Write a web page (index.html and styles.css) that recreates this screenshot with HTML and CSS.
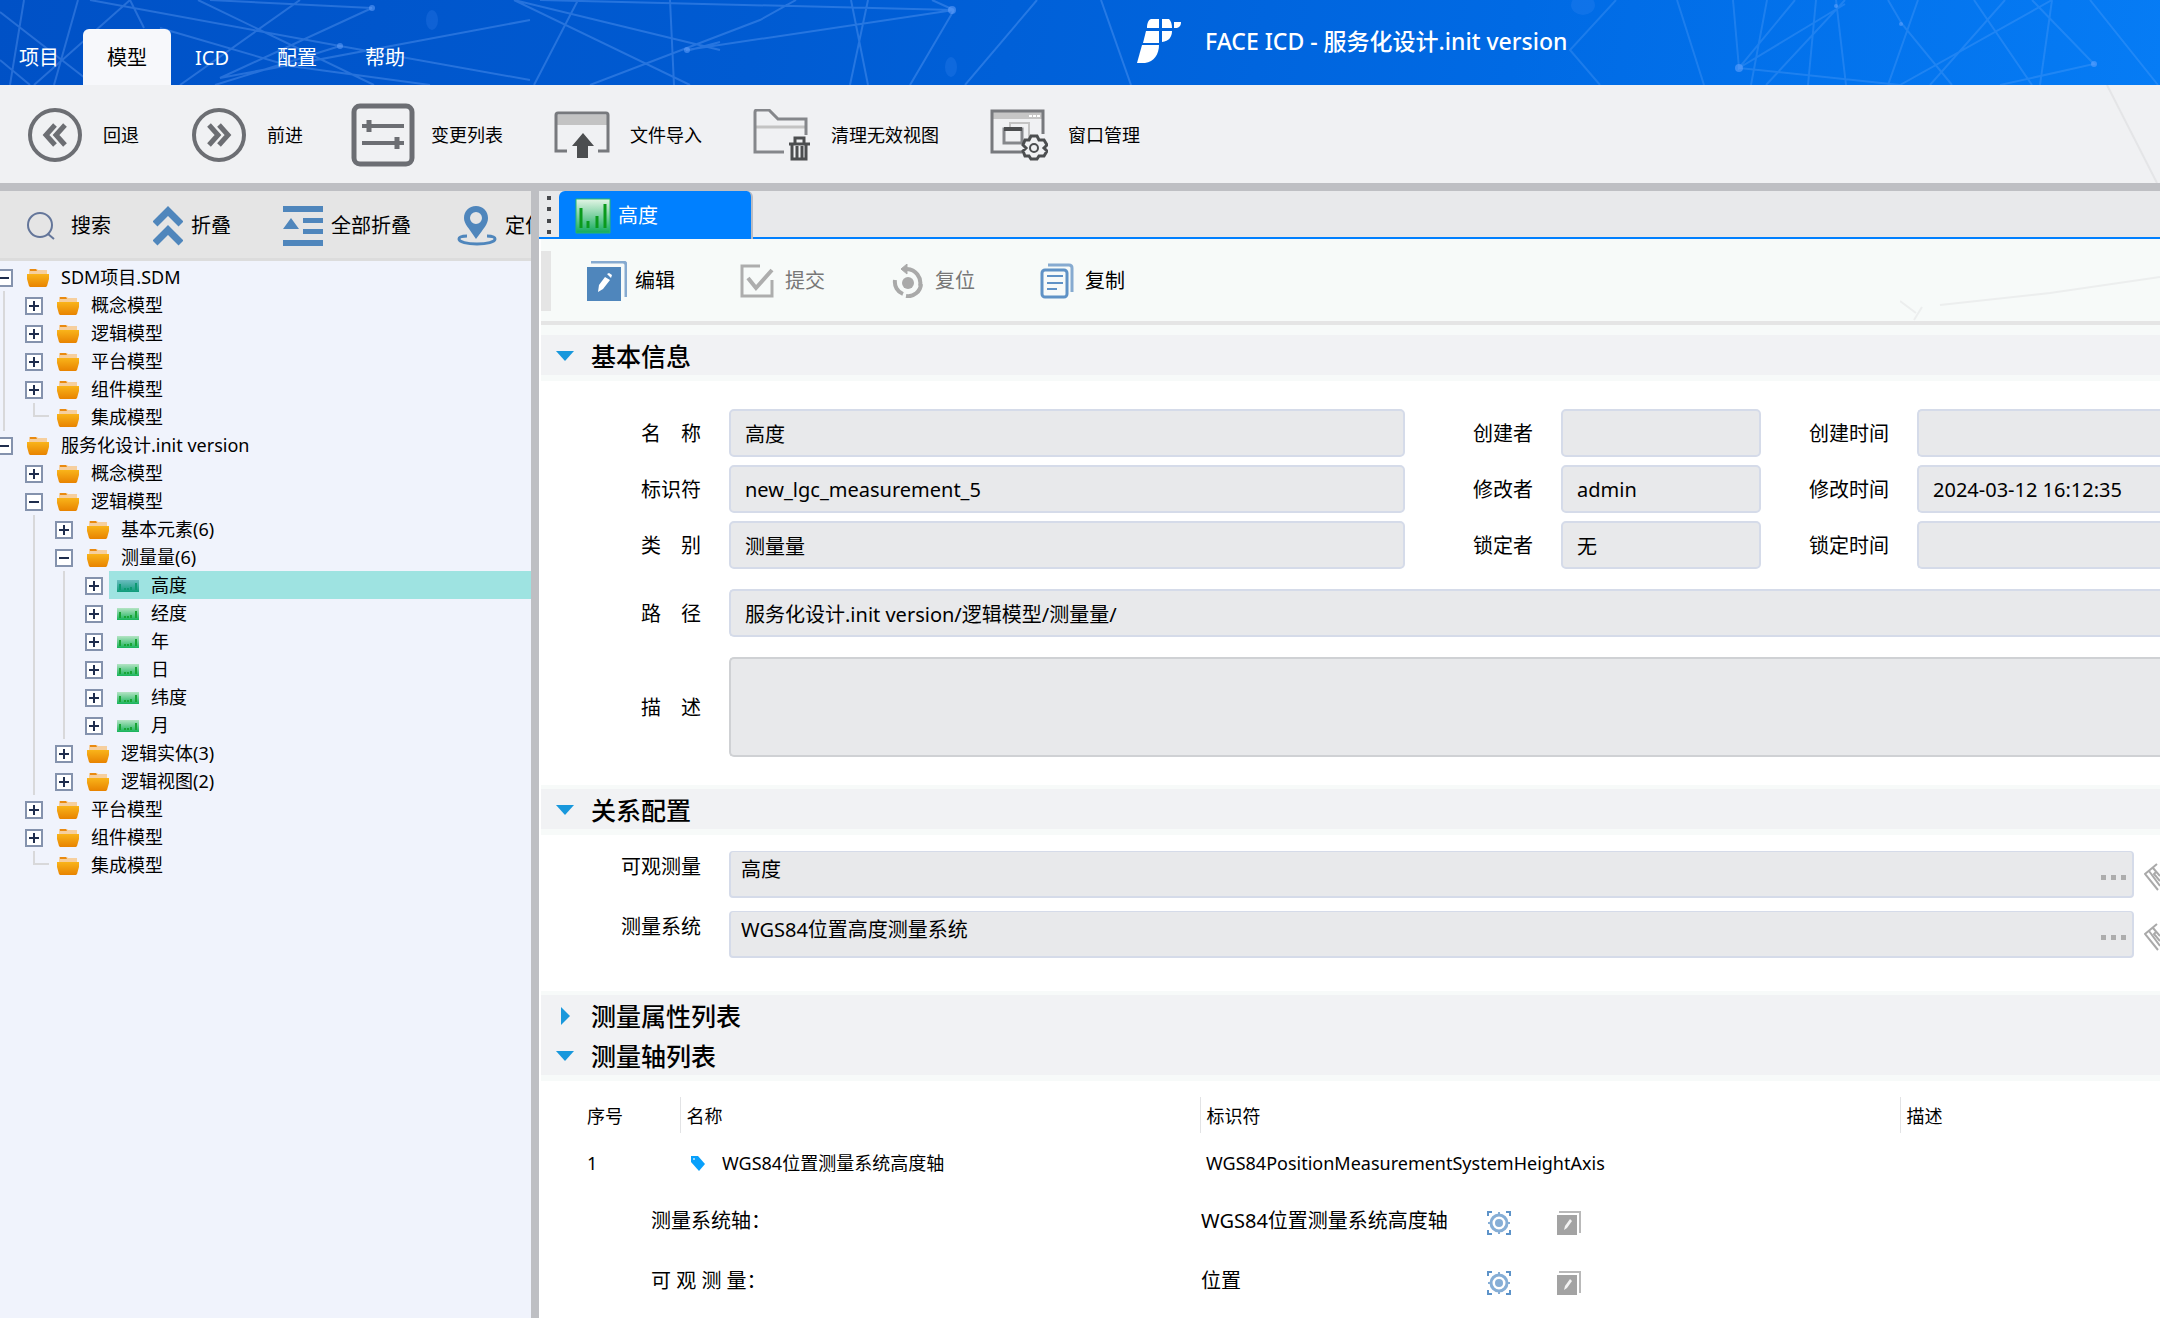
FILE: index.html
```html
<!DOCTYPE html>
<html lang="zh-CN">
<head>
<meta charset="utf-8">
<title>FACE ICD - 服务化设计.init version</title>
<link rel="stylesheet" href="styles.css">
</head>
<body>
<svg class="sprite" aria-hidden="true">
  <defs>
    <linearGradient id="g-folder" x1="0" y1="0" x2="0" y2="1">
      <stop offset="0" stop-color="#f9b41a"/><stop offset="1" stop-color="#e88300"/>
    </linearGradient>
    <linearGradient id="g-ruler" x1="0" y1="0" x2="0" y2="1">
      <stop offset="0" stop-color="#b4e4c4"/><stop offset="1" stop-color="#18b35a"/>
    </linearGradient>
    <linearGradient id="g-ruler-sel" x1="0" y1="0" x2="0" y2="1">
      <stop offset="0" stop-color="#6bbcc0"/><stop offset="1" stop-color="#0f9c7a"/>
    </linearGradient>
    <linearGradient id="g-ruler-tab" x1="0" y1="0" x2="0" y2="1">
      <stop offset="0" stop-color="#e4f5e6"/><stop offset="1" stop-color="#12ab5c"/>
    </linearGradient>
  </defs>
  <symbol id="folder" viewBox="0 0 22 18">
    <path d="M2 0h8l1 1h9v5H2z" fill="#f6cf9e"/>
    <path d="M3 0h6l1 2H3z" fill="#e98a10"/>
    <path d="M0 5h22v5l-2 7-1 1H3l-1-1-2-7z" fill="url(#g-folder)"/>
  </symbol>
  <symbol id="ruler" viewBox="0 0 22 12">
    <path d="M0 0h22v12H0z" fill="url(#g-ruler)"/>
    <path d="M3 4v6M8 8v2M11 8v2M14 7v3M19 3v7" stroke="#18a535" stroke-width="2" fill="none"/>
  </symbol>
  <symbol id="ruler-sel" viewBox="0 0 22 12">
    <path d="M0 0h22v12H0z" fill="url(#g-ruler-sel)"/>
    <path d="M3 4v6M8 8v2M11 8v2M14 7v3M19 3v7" stroke="#0d9a72" stroke-width="2" fill="none"/>
  </symbol>
  <symbol id="dots" viewBox="0 0 26 6">
    <path d="M1 1h5v5H1zM11 1h5v5h-5zM21 1h5v5h-5z" fill="#adadad"/>
  </symbol>
  <symbol id="eraser" viewBox="0 0 16 28">
    <path d="M13 1L1 11l13 16M5 8l11 15M13 8l-3 3 6 7M9 5l7 8" fill="none" stroke="#a9a9a9" stroke-width="2"/>
  </symbol>
  <symbol id="target" viewBox="0 0 24 24">
    <path d="M1 5V1h4M19 1h4v4M23 19v4h-4M5 23H1v-4" fill="none" stroke="#5d93c9" stroke-width="2"/>
    <circle cx="12" cy="12" r="8" fill="none" stroke="#86aed6" stroke-width="3"/>
    <circle cx="12" cy="12" r="4" fill="#86aed6"/>
    <path d="M12 1v3M12 20v3M1 12h3M20 12h3" stroke="#86aed6" stroke-width="2"/>
  </symbol>
  <symbol id="edit-gray" viewBox="0 0 24 24">
    <path d="M2 1h21v21" fill="none" stroke="#b9b9b9" stroke-width="2"/>
    <path d="M0 4h20v20H0z" fill="#a3a3a3"/>
    <path d="M7 19l1-4 5-7 2 2-5 7z" fill="#f3f3f3"/>
  </symbol>
</svg>

<header class="topbar">
  <svg class="topbar-net" viewBox="0 0 2160 85" preserveAspectRatio="xMinYMin slice" aria-hidden="true">
    <g stroke="#7fb4ff" stroke-width="2" fill="none">
      <path opacity=".3" d="M24 0L10 85M78 0L54 85M130 0L34 85M0 12L94 85M90 0L340 46L530 80M198 0L374 85M130 0L144 28M0 60L30 85M160 28L290 66L430 85M340 46L215 85M300 0L180 85M372 8L220 78L530 20M372 8L210 0M514 0L690 85M578 0L534 85M670 0L674 85M590 85L760 20L796 0M514 0L720 50M686 50L954 10L540 0M690 50L720 42M851 0L868 85M868 0L850 85M954 10L910 85M932 0L954 10M1037 0L965 85M1101 0L1131 85"/>
      <path opacity=".22" d="M1616 0L1570 50L1600 85M1677 0L1704 85M1733 0L1739 68L1795 0M1767 0L1751 85M1845 0L1766 85M1816 0L1808 85M1836 0L1846 85M1739 68L1900 85L2052 0M1739 68L1845 4M1888 0L1902 24L1952 85M1918 0L1888 85M1974 0L2032 85M2005 0L1930 85M2032 0L2094 64L2000 85M2052 0L2040 85M2090 0L2158 85"/>
    </g>
    <g fill="#6fa8ff" opacity=".5">
      <circle cx="372" cy="8" r="3"/><circle cx="340" cy="46" r="3"/><circle cx="952" cy="10" r="4"/><circle cx="687" cy="50" r="3"/>
      <circle cx="1739" cy="68" r="4"/><circle cx="1901" cy="24" r="2"/><circle cx="2094" cy="64" r="3"/><circle cx="1836" cy="6" r="2"/>
    </g>
    <g fill="#4c90f5" opacity=".2">
      <ellipse cx="432" cy="20" rx="6" ry="10"/><ellipse cx="951" cy="67" rx="6" ry="10"/><ellipse cx="1583" cy="5" rx="12" ry="10"/>
    </g>
  </svg>
  <nav class="menu">
    <a href="#project">项目</a>
    <a href="#model" class="active">模型</a>
    <a href="#icd">ICD</a>
    <a href="#config">配置</a>
    <a href="#help">帮助</a>
  </nav>
  <div class="brand">
    <svg width="44" height="44" viewBox="0 0 44 44" aria-hidden="true">
      <g fill="#fff">
        <path d="M14 0h8v9H10c0-4 1-8 4-9zM25 0h7c2 2 3 5 3 9H25zM37 3h7c0 4-2 6-6 6h-1z"/>
        <path d="M9 12h13v12H6zM25 12h10c0 6-3 10-10 11z"/>
        <path d="M5 26h17c0 9-5 17-14 18H0z"/>
      </g>
    </svg>
    <span>FACE ICD - 服务化设计.init version</span>
  </div>
</header>

<div class="toolbar" role="toolbar">
  <svg class="toolbar-net" width="60" height="98" viewBox="0 0 60 98" aria-hidden="true"><path d="M7 0l50 98" stroke="#e4e5e7" stroke-width="2"/></svg>
  <button type="button" class="tool-nav">
    <svg width="54" height="54" viewBox="0 0 54 54" fill="none" stroke="#6c6e73"><circle cx="27" cy="27" r="25" stroke-width="4"/><path d="M27 17L18 27l9 10M37 17l-9 10 9 10" stroke-width="5"/></svg>回退
  </button>
  <button type="button" class="tool-nav">
    <svg width="54" height="54" viewBox="0 0 54 54" fill="none" stroke="#6c6e73"><circle cx="27" cy="27" r="25" stroke-width="4"/><path d="M17 17l9 10-9 10M27 17l9 10-9 10" stroke-width="5"/></svg>前进
  </button>
  <button type="button" class="tool-list">
    <svg width="64" height="64" viewBox="0 0 64 64" fill="none" stroke="#6c6e73"><rect x="3" y="3" width="58" height="58" rx="6" stroke-width="5"/><path d="M11 23h42M11 40h42" stroke-width="4"/><path d="M18 17v12M46 34v12" stroke-width="5"/></svg>变更列表
  </button>
  <button type="button">
    <svg width="56" height="52" viewBox="0 0 56 52"><path d="M2 6h52v10H2z" fill="#c3c3c3"/><path d="M13 42H2V6q0-2 2-2h48q2 0 2 2v36H44" fill="none" stroke="#77797d" stroke-width="3"/><path d="M29 24l11 13h-6v12H23V37h-5z" fill="#4c4e50"/></svg>文件导入
  </button>
  <button type="button">
    <svg width="58" height="52" viewBox="0 0 58 52" fill="none"><path d="M2 18h51" stroke="#c3c3c3" stroke-width="3"/><path d="M31 43H2V3q0-2 2-2h12l9 9h28v16" stroke="#85878b" stroke-width="3"/><path d="M36 35h21M42 34v-5h9v5M39 36v14h14V36M44 37v12M49 37v12" stroke="#4c4e50" stroke-width="3"/></svg>清理无效视图
  </button>
  <button type="button">
    <svg width="58" height="52" viewBox="0 0 58 52" fill="none"><path d="M2 3h51v7H2z" fill="#c6c6c6"/><path d="M32 43H2V2h51v23" stroke="#77797d" stroke-width="3"/><path d="M39 7h3M43 7h3M47 7h3" stroke="#fff" stroke-width="2"/><path d="M20 18v-4h19v15" stroke="#c3c3c3" stroke-width="2"/><path d="M14 20h18v14H14z" stroke="#85878b" stroke-width="3"/><path d="M14 20h18" stroke="#4c4e50" stroke-width="4"/><path d="M39 31l2-4h6l2 4h5l3 5-3 3 3 3-3 5h-5l-2 3h-6l-2-3h-4l-2-5 3-3-3-3 2-5z" fill="#f0f1f3" stroke="#4c4e50" stroke-width="3"/><circle cx="44" cy="39" r="4" stroke="#4c4e50" stroke-width="2"/></svg>窗口管理
  </button>
</div>

<div class="workspace">
  <aside class="sidebar">
    <div class="side-tools">
      <button type="button" class="search">
        <svg width="28" height="28" viewBox="0 0 28 28" fill="none" stroke="#64769a" stroke-width="2"><circle cx="13" cy="13" r="12"/><path d="M21 22l6 5"/></svg>搜索
      </button>
      <button type="button" class="fold">
        <svg width="30" height="40" viewBox="0 0 30 40" fill="none" stroke="#4f86bc" stroke-width="7"><path d="M2 18L15 5l13 13M2 37l13-13 13 13"/></svg>折叠
      </button>
      <button type="button" class="fold-all">
        <svg width="40" height="40" viewBox="0 0 40 40" fill="#4f86bc"><path d="M0 0h40v6H0zM20 12h20v5H20zM20 23h20v5H20zM0 34h40v6H0zM8 12l8 11H0z"/></svg>全部折叠
      </button>
      <button type="button" class="locate">
        <svg width="40" height="40" viewBox="0 0 40 40"><path d="M10 30c-5 0-8 1-8 3 0 3 8 5 18 5s18-2 18-5c0-2-3-3-8-3" fill="none" stroke="#4f86bc" stroke-width="3"/><path fill-rule="evenodd" d="M19 0c7 0 12 5 12 12 0 6-4 10-12 21C12 22 7 18 7 12 7 5 12 0 19 0zm0 6a6 6 0 1 0 0 12 6 6 0 0 0 0-12z" fill="#4f86bc"/></svg>定位
      </button>
    </div>

    <ul class="tree">
      <li>
        <div class="node"><button type="button" class="toggle minus" aria-label="收起"></button><span class="item"><svg width="22" height="18"><use href="#folder"/></svg>SDM项目.SDM</span></div>
        <ul class="guide">
          <li><div class="node"><button type="button" class="toggle" aria-label="展开"></button><span class="item"><svg width="22" height="18"><use href="#folder"/></svg>概念模型</span></div></li>
          <li><div class="node"><button type="button" class="toggle" aria-label="展开"></button><span class="item"><svg width="22" height="18"><use href="#folder"/></svg>逻辑模型</span></div></li>
          <li><div class="node"><button type="button" class="toggle" aria-label="展开"></button><span class="item"><svg width="22" height="18"><use href="#folder"/></svg>平台模型</span></div></li>
          <li><div class="node"><button type="button" class="toggle" aria-label="展开"></button><span class="item"><svg width="22" height="18"><use href="#folder"/></svg>组件模型</span></div></li>
          <li><div class="node"><span class="elbow"></span><span class="item"><svg width="22" height="18"><use href="#folder"/></svg>集成模型</span></div></li>
        </ul>
      </li>
      <li>
        <div class="node"><button type="button" class="toggle minus" aria-label="收起"></button><span class="item"><svg width="22" height="18"><use href="#folder"/></svg>服务化设计.init version</span></div>
        <ul>
          <li><div class="node"><button type="button" class="toggle" aria-label="展开"></button><span class="item"><svg width="22" height="18"><use href="#folder"/></svg>概念模型</span></div></li>
          <li>
            <div class="node"><button type="button" class="toggle minus" aria-label="收起"></button><span class="item"><svg width="22" height="18"><use href="#folder"/></svg>逻辑模型</span></div>
            <ul class="guide">
              <li><div class="node"><button type="button" class="toggle" aria-label="展开"></button><span class="item"><svg width="22" height="18"><use href="#folder"/></svg>基本元素(6)</span></div></li>
              <li>
                <div class="node"><button type="button" class="toggle minus" aria-label="收起"></button><span class="item"><svg width="22" height="18"><use href="#folder"/></svg>测量量(6)</span></div>
                <ul class="guide">
                  <li><div class="node"><button type="button" class="toggle" aria-label="展开"></button><span class="item selected"><svg width="22" height="12"><use href="#ruler-sel"/></svg>高度</span></div></li>
                  <li><div class="node"><button type="button" class="toggle" aria-label="展开"></button><span class="item"><svg width="22" height="12"><use href="#ruler"/></svg>经度</span></div></li>
                  <li><div class="node"><button type="button" class="toggle" aria-label="展开"></button><span class="item"><svg width="22" height="12"><use href="#ruler"/></svg>年</span></div></li>
                  <li><div class="node"><button type="button" class="toggle" aria-label="展开"></button><span class="item"><svg width="22" height="12"><use href="#ruler"/></svg>日</span></div></li>
                  <li><div class="node"><button type="button" class="toggle" aria-label="展开"></button><span class="item"><svg width="22" height="12"><use href="#ruler"/></svg>纬度</span></div></li>
                  <li><div class="node"><button type="button" class="toggle" aria-label="展开"></button><span class="item"><svg width="22" height="12"><use href="#ruler"/></svg>月</span></div></li>
                </ul>
              </li>
              <li><div class="node"><button type="button" class="toggle" aria-label="展开"></button><span class="item"><svg width="22" height="18"><use href="#folder"/></svg>逻辑实体(3)</span></div></li>
              <li><div class="node"><button type="button" class="toggle" aria-label="展开"></button><span class="item"><svg width="22" height="18"><use href="#folder"/></svg>逻辑视图(2)</span></div></li>
            </ul>
          </li>
          <li><div class="node"><button type="button" class="toggle" aria-label="展开"></button><span class="item"><svg width="22" height="18"><use href="#folder"/></svg>平台模型</span></div></li>
          <li><div class="node"><button type="button" class="toggle" aria-label="展开"></button><span class="item"><svg width="22" height="18"><use href="#folder"/></svg>组件模型</span></div></li>
          <li><div class="node"><span class="elbow"></span><span class="item"><svg width="22" height="18"><use href="#folder"/></svg>集成模型</span></div></li>
        </ul>
      </li>
    </ul>
  </aside>

  <main class="editor">
    <div class="tabs">
      <svg class="grip" width="20" height="46" viewBox="0 0 20 46" aria-hidden="true"><path d="M8 5h4v4H8zM8 16h4v4H8zM8 28h4v4H8zM8 39h4v4H8z" fill="#46484c"/></svg>
      <button type="button" class="tab">
        <svg width="36" height="36" viewBox="0 0 36 36"><path d="M1 1h34v34H1z" fill="url(#g-ruler-tab)" stroke="#28b868" stroke-width="1"/><path d="M6 10v20M13 23v7M22 18v12M30 6v24" stroke="#0a9a1c" stroke-width="3"/></svg>高度
      </button>
    </div>

    <div class="actions">
      <svg class="actions-net" width="260" height="82" viewBox="0 0 260 82" aria-hidden="true"><path d="M40 66l110-12 110-16M0 62l16 12M22 68l-8 13" stroke="#eceeee" stroke-width="2" fill="none"/></svg>
      <button type="button">
        <svg width="40" height="40" viewBox="0 0 40 40"><path d="M4 1h32q3 0 3 3v32" fill="none" stroke="#86aad0" stroke-width="3"/><path d="M0 6h34v34H0z" fill="#4f86bc"/><path d="M11 31l1-7 6-8 5 3-7 9zM20 13l2-1 3 2-1 3z" fill="#fff"/></svg>编辑
      </button>
      <button type="button" class="submit" disabled>
        <svg width="34" height="34" viewBox="0 0 34 34" fill="none" stroke="#adadad"><path d="M20 2H2v30h30V16" stroke-width="3"/><path d="M8 14l8 10L32 6" stroke-width="4"/></svg>提交
      </button>
      <button type="button" class="reset" disabled>
        <svg width="32" height="34" viewBox="0 0 32 34" fill="none" stroke="#a9a9a9"><path d="M3 16a13 13 0 0 0 8 14M14 32a13 13 0 0 0 15-12M28 22A14 14 0 0 0 15 5" stroke-width="4"/><path d="M15 0v10l-6-5z" fill="#a9a9a9"/><circle cx="16" cy="19" r="6" fill="#a9a9a9" stroke="none"/></svg>复位
      </button>
      <button type="button" class="copy">
        <svg width="34" height="36" viewBox="0 0 34 36" fill="none" stroke="#5f92c6"><path d="M8 2h21q3 0 3 3v24" stroke="#86aad0" stroke-width="3"/><rect x="2" y="7" width="25" height="27" rx="3" stroke-width="3"/><path d="M7 13h16M7 20h16M7 26h10" stroke-width="2"/></svg>复制
      </button>
    </div>

    <section class="first">
      <h2><button type="button"><i class="arrow down"></i>基本信息</button></h2>
      <form class="basic">
        <label for="f-name">名　称</label><input id="f-name" value="高度" readonly>
        <label for="f-creator">创建者</label><input id="f-creator" value="" readonly>
        <label for="f-ctime">创建时间</label><input id="f-ctime" class="cut" value="" readonly>

        <label for="f-id">标识符</label><input id="f-id" value="new_lgc_measurement_5" readonly>
        <label for="f-modifier">修改者</label><input id="f-modifier" value="admin" readonly>
        <label for="f-mtime">修改时间</label><input id="f-mtime" class="cut" value="2024-03-12 16:12:35" readonly>

        <label for="f-type">类　别</label><input id="f-type" value="测量量" readonly>
        <label for="f-locker">锁定者</label><input id="f-locker" value="无" readonly>
        <label for="f-ltime">锁定时间</label><input id="f-ltime" class="cut" value="" readonly>

        <label for="f-path" class="spaced">路　径</label><input id="f-path" class="wide cut spaced" value="服务化设计.init version/逻辑模型/测量量/" readonly>
        <label for="f-desc" class="spaced">描　述</label><textarea id="f-desc" class="wide cut spaced" readonly></textarea>
      </form>
    </section>

    <section>
      <h2><button type="button"><i class="arrow down"></i>关系配置</button></h2>
      <form class="relation">
        <label for="f-obs">可观测量</label>
        <div class="picker"><input id="f-obs" value="高度" readonly><button type="button" aria-label="选择"><svg width="26" height="6"><use href="#dots"/></svg></button></div>
        <button type="button" class="erase" aria-label="清除"><svg width="16" height="28"><use href="#eraser"/></svg></button>
        <label for="f-sys">测量系统</label>
        <div class="picker"><input id="f-sys" value="WGS84位置高度测量系统" readonly><button type="button" aria-label="选择"><svg width="26" height="6"><use href="#dots"/></svg></button></div>
        <button type="button" class="erase" aria-label="清除"><svg width="16" height="28"><use href="#eraser"/></svg></button>
      </form>
    </section>

    <section>
      <h2><button type="button"><i class="arrow right"></i>测量属性列表</button></h2>
      <h2><button type="button"><i class="arrow down"></i>测量轴列表</button></h2>
      <div class="axes">
        <table>
          <colgroup><col class="c-no"><col class="c-name"><col class="c-id"><col></colgroup>
          <thead><tr><th>序号</th><th>名称</th><th>标识符</th><th>描述</th></tr></thead>
          <tbody>
            <tr class="entry">
              <td>1</td>
              <td><span class="axis"><svg width="16" height="16" viewBox="0 0 16 16"><path d="M1 1h7l7 8-6 7-8-9z" fill="#08a0fb"/><circle cx="4" cy="4" r="1" fill="#bfe6ff"/></svg>WGS84位置测量系统高度轴</span></td>
              <td>WGS84PositionMeasurementSystemHeightAxis</td>
              <td></td>
            </tr>
            <tr class="detail">
              <td colspan="2">测量系统轴：</td>
              <td colspan="2"><span class="value"><span class="value-name">WGS84位置测量系统高度轴</span><button type="button" aria-label="定位"><svg width="24" height="24"><use href="#target"/></svg></button><button type="button" aria-label="编辑"><svg width="24" height="24"><use href="#edit-gray"/></svg></button></span></td>
            </tr>
            <tr class="detail">
              <td colspan="2">可 观 测 量：</td>
              <td colspan="2"><span class="value"><span class="value-name">位置</span><button type="button" aria-label="定位"><svg width="24" height="24"><use href="#target"/></svg></button><button type="button" aria-label="编辑"><svg width="24" height="24"><use href="#edit-gray"/></svg></button></span></td>
            </tr>
          </tbody>
        </table>
      </div>
    </section>
  </main>
</div>
</body>
</html>
```
FILE: styles.css
```css
* { box-sizing: border-box; }

body {
  margin: 0;
  min-height: 100vh;
  display: flex;
  flex-direction: column;
  overflow: hidden;
  font: 18px/28px "Noto Sans", "Noto Sans CJK SC", sans-serif;
  color: #000;
  background: #fff;
}

button, input, textarea { font: inherit; color: inherit; }
button { border: 0; padding: 0; background: none; display: flex; align-items: center; white-space: nowrap; }
svg { flex: none; display: block; }
.sprite { position: absolute; width: 0; height: 0; }

/* top bar */
.topbar {
  position: relative;
  height: 85px;
  display: flex;
  align-items: flex-start;
  background: linear-gradient(100deg, #0051c6, #005bd2 35%, #006ae4 70%, #067cf5);
  color: #fff;
}
.topbar-net { position: absolute; inset: 0; width: 100%; height: 100%; }
.menu { position: relative; display: flex; margin-left: -5px; padding-top: 29px; font-size: 20px; }
.menu a { height: 56px; padding: 0 24px; line-height: 58px; color: #fff; text-decoration: none; }
.menu .active { background: #f7f8fb; color: #000; border-radius: 6px 6px 0 0; }
.brand { position: absolute; left: 1137px; top: 19px; display: flex; gap: 24px; align-items: center; height: 44px; font-size: 23px; font-weight: 500; white-space: nowrap; }

/* main toolbar */
.toolbar {
  position: relative;
  height: 106px;
  padding: 2px 28px 0;
  display: flex;
  align-items: center;
  gap: 51px;
  background: #f0f1f3;
  border-bottom: 8px solid #bebfc3;
}
.toolbar button { gap: 20px; }
.toolbar .tool-nav { gap: 21px; margin-right: 2px; }
.toolbar .tool-nav + .tool-list { margin-left: -5px; }
.toolbar .tool-list { gap: 16px; }
.toolbar-net { position: absolute; right: 0; top: 0; }

.workspace { flex: 1; display: flex; }

/* model tree */
.sidebar { width: 539px; flex: none; overflow: hidden; background: #f0f3fc; border-right: 8px solid #bebfc3; }
.side-tools {
  height: 70px;
  padding: 2px 0 0 27px;
  display: flex;
  align-items: center;
  font-size: 20px;
  background: #e5e5e5;
  border-bottom: 3px solid #dcdcdc;
}
.search { gap: 16px; margin-right: 42px; }
.fold { gap: 8px; margin-right: 52px; }
.fold-all, .locate { gap: 8px; }
.fold-all { margin-right: 46px; }

.tree, .tree ul { list-style: none; margin: 0; padding: 0; }
.tree { margin: 2px 0 0 -5px; }
.tree ul { padding-left: 30px; }
.tree .guide { background: linear-gradient(#d8d8da, #d8d8da) 8px 0 / 2px 100% no-repeat; }
.node { height: 28px; display: flex; align-items: center; gap: 6px; }
.toggle {
  flex: none;
  width: 18px;
  height: 18px;
  margin-top: 2px;
  border: 2px solid #8492ad;
  background:
    linear-gradient(#1f2d4d, #1f2d4d) center / 10px 2px no-repeat,
    linear-gradient(#1f2d4d, #1f2d4d) center / 2px 10px no-repeat,
    #fff;
}
.toggle.minus { background: linear-gradient(#1f2d4d, #1f2d4d) center / 10px 2px no-repeat, #fff; }
.elbow { width: 24px; height: 28px; margin-right: -6px; background: linear-gradient(#d8d8da, #d8d8da) 8px 0 / 2px 14px no-repeat, linear-gradient(#d8d8da, #d8d8da) 8px 12px / 16px 2px no-repeat; }
.item { flex: 1; height: 28px; display: flex; align-items: center; gap: 12px; padding-left: 8px; }
.item svg { margin-top: 2px; }
.selected { background: #9ee3e1; }

/* editor */
.editor { flex: 1; min-width: 0; background: #fff; }
.tabs { height: 48px; display: flex; background: #e8e9eb; border-bottom: 2px solid #0080ff; }
.tab { width: 194px; height: 48px; padding: 2px 0 0 16px; gap: 7px; background: #0080ff; color: #fff; font-size: 20px; border-radius: 6px 6px 0 0; border-right: 2px solid #b9bcc4; }

.actions {
  position: relative;
  height: 86px;
  padding-top: 2px;
  margin-left: 2px;
  display: flex;
  align-items: center;
  background: #f7faf9;
  border-bottom: 4px solid #e5e5e5;
  font-size: 20px;
}
.actions::before { content: ""; width: 10px; height: 60px; margin-right: 36px; background: #e5e5e5; }
.actions button { gap: 8px; }
.actions button:disabled { color: #777; }
.actions .submit { gap: 11px; margin-left: 65px; }
.actions .reset { gap: 11px; margin-left: 67px; }
.actions .copy { gap: 11px; margin-left: 65px; }
.actions-net { position: absolute; right: 0; top: 0; }

section { margin-left: 2px; border-top: 4px solid #f7faf9; }
section.first { border-top-width: 10px; }
h2 { margin: 0; height: 40px; font-size: 25px; line-height: 40px; font-weight: 500; background: #f1f2f4; }
h2 button { height: 40px; padding: 2px 0 0 14px; gap: 16px; }
.arrow { width: 20px; height: 40px; display: grid; place-items: center; }
.arrow::before { content: ""; border: solid transparent; }
.arrow.down::before { border-width: 10px 9px 0; border-top-color: #1898dc; }
.arrow.right::before { border-width: 9px 0 9px 9px; border-left-color: #1898dc; }

form, .axes { border-top: 6px solid #f7faf9; }
input, textarea {
  width: 100%;
  height: 48px;
  margin: 0;
  padding: 0 14px;
  border: 2px solid #d5dbe9;
  border-radius: 5px;
  background: #e8e9eb;
  outline: 0;
  display: block;
}
textarea { height: 100px; border-color: #cfd1d4; resize: none; }
input.cut, textarea.cut { border-right: 0; border-radius: 5px 0 0 5px; }
label { text-align: right; padding-top: 2px; }

.basic {
  display: grid;
  grid-template-columns: 160px 1fr 100px 200px 100px 243px;
  gap: 8px 28px;
  align-items: center;
  padding: 28px 0;
  font-size: 20px;
}
.wide { grid-column: span 5; }
.spaced { margin-top: 12px; }

.relation {
  display: grid;
  grid-template-columns: 188px 1fr 26px;
  row-gap: 13px;
  padding: 16px 0 33px;
  font-size: 20px;
}
.relation label { padding-right: 28px; }
.relation .erase { padding: 4px 0 0 10px; }
.picker { display: flex; height: 47px; border: 2px solid #d5dbe9; border-top-width: 1px; border-radius: 4px; background: #e8e9eb; }
.picker input { flex: 1; height: 32px; padding: 0 10px; border: 0; background: none; }
.picker button { padding: 6px 6px 0; }

/* axis table */
.axes { padding-top: 16px; }
table { width: 100%; table-layout: fixed; border-collapse: collapse; text-align: left; }
.c-no { width: 139px; }
.c-name { width: 520px; }
.c-id { width: 700px; }
th, td { padding: 2px 0 0 6px; font-weight: 400; white-space: nowrap; }
th { height: 36px; border-left: 1px solid #e2e3e5; }
th:first-child { border-left: 0; }
th:first-child, .entry td:first-child { padding-left: 46px; }
.entry td { height: 58px; }
.axis { display: flex; align-items: center; gap: 16px; padding-left: 4px; }
.detail td { height: 60px; padding: 0 0 0 1px; font-size: 20px; }
.detail td:first-child { padding-left: 110px; }
.value { display: flex; align-items: center; gap: 46px; }
.value-name { width: 240px; }
.value button { padding-top: 4px; }
```
